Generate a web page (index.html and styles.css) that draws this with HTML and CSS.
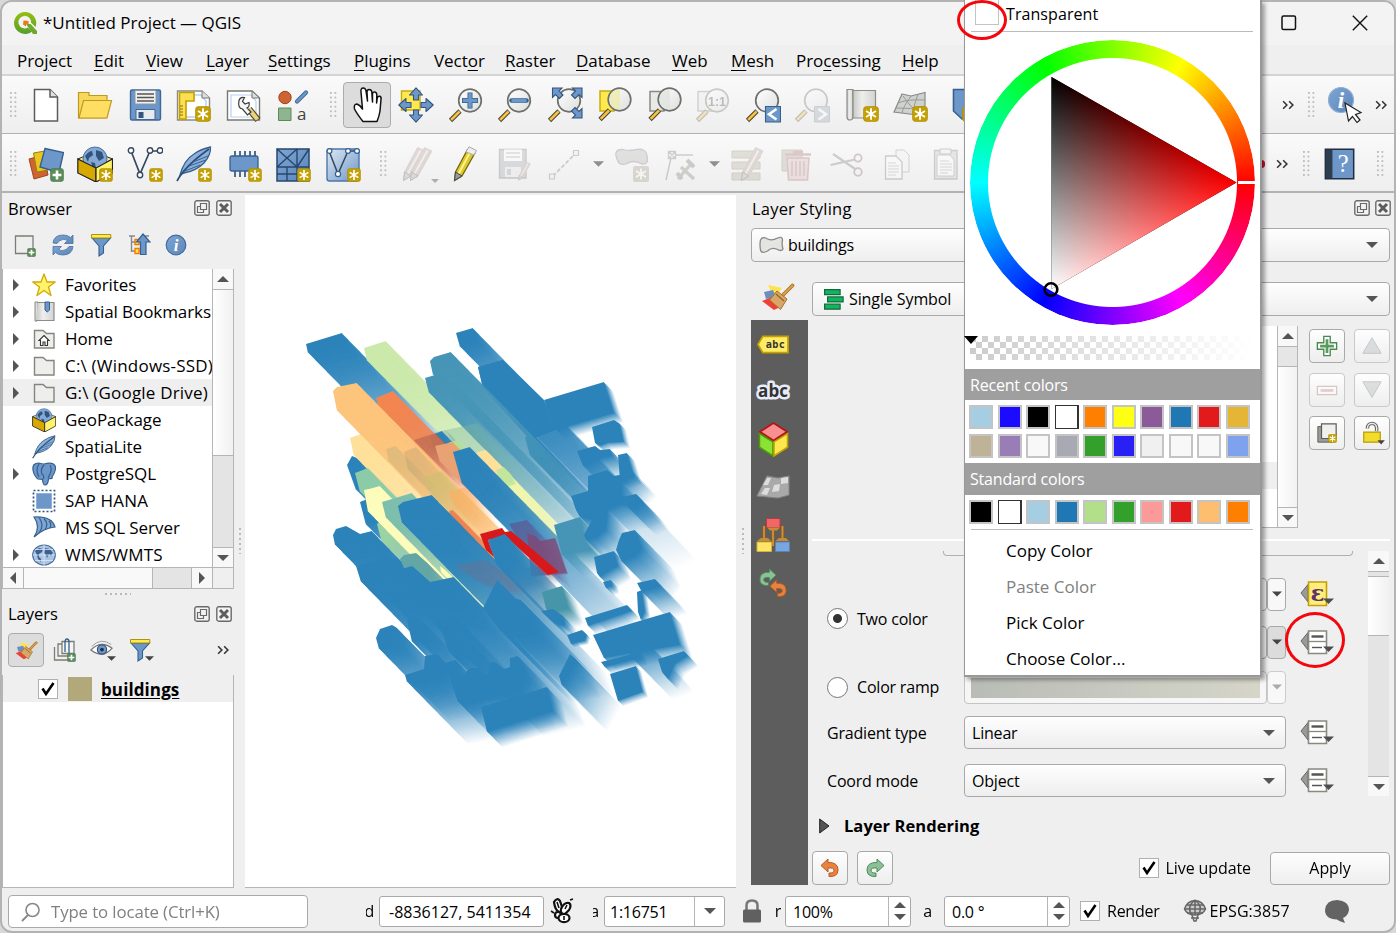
FILE: index.html
```html
<!DOCTYPE html>
<html lang="en">
<head>
<meta charset="utf-8">
<title>*Untitled Project — QGIS</title>
<link rel="stylesheet" href="styles.css">
</head>
<body>
<svg class="defs" aria-hidden="true">
  <defs>
    <linearGradient id="gSteel" x1="0" y1="0" x2="1" y2="1"><stop offset="0" stop-color="#7fa5d2"/><stop offset="1" stop-color="#5b86ba"/></linearGradient>
    <linearGradient id="gLens" x1="0" y1="0" x2="1" y2="1"><stop offset="0" stop-color="#ffffff"/><stop offset="1" stop-color="#dcdedc"/></linearGradient>
    <linearGradient id="gPaper" x1="0" y1="0" x2="1" y2="0"><stop offset="0" stop-color="#c8c9c7"/><stop offset=".4" stop-color="#eeeeec"/><stop offset="1" stop-color="#d3d4d2"/></linearGradient>
    <linearGradient id="gPaleBlue" x1="0" y1="0" x2="1" y2="1"><stop offset="0" stop-color="#dfe8f3"/><stop offset="1" stop-color="#6d96c8"/></linearGradient>
    <linearGradient id="gPlug" x1="0" y1="0" x2="0" y2="1"><stop offset="0" stop-color="#97bf0d"/><stop offset="1" stop-color="#539f2f"/></linearGradient>
  </defs>
  <symbol id="star" viewBox="0 0 16 16"><rect x=".5" y=".5" width="15" height="15" rx="3" fill="#c4a000" stroke="#a58b0b" stroke-width=".6"/><path d="M8 2.2v11.6M3 5l10 6M13 5L3 11" stroke="#fff" stroke-width="1.9"/></symbol>
  <symbol id="plus" viewBox="0 0 14 14"><rect x=".5" y=".5" width="13" height="13" rx="2.5" fill="#5a8c5a" stroke="#47764a" stroke-width=".6"/><path d="M7 2.6v8.8M2.6 7h8.8" stroke="#fff" stroke-width="2.6"/></symbol>
  <symbol id="lens" viewBox="0 0 36 36"><path d="M14 22l3-3" stroke="#222" stroke-width="4"/><path d="M2.500 33.500L12 24" stroke="#4a4a42" stroke-width="4.600"/><path d="M3.200 32.800L11.600 24.400" stroke="#fcc438" stroke-width="2.600"/><circle cx="22" cy="13.500" r="11.300" fill="url(#gLens)" stroke="#6e706b" stroke-width="1.700"/></symbol>
  <symbol id="new" viewBox="0 0 36 36"><path d="M6.500 2.500H22L29.500 10V34H6.500z" fill="#fff" stroke="#5c5c5c" stroke-width="1.500"/><path d="M22 2.500V10H29.500" fill="#e2e2e0" stroke="#5c5c5c" stroke-width="1.500"/></symbol>
  <symbol id="open" viewBox="0 0 36 36"><path d="M1.500 31V5.500H12V8.500H30V14L33 14L29 31z" fill="#f9d65c" stroke="#bf9a20" stroke-width="1.200"/><path d="M2 31L6.500 13.500H34.500L30 31z" fill="#ffdf63" stroke="#bf9a20" stroke-width="1.200"/></symbol>
  <symbol id="save" viewBox="0 0 36 36"><path d="M5 3H32q1.500 0 1.500 1.500V31.500q0 1.500-1.500 1.500H5Q3.500 33 3.500 31.500V4.500Q3.500 3 5 3z" fill="#6d97c9" stroke="#3f6797" stroke-width="1.400"/><path d="M8 3.500H29V17H8z" fill="#f1f1f0" stroke="#8a97a5"/><path d="M10 7H27M10 10.500H27M10 14H27" stroke="#555" stroke-width="1.300"/><path d="M9 22.500H28V32.500H9z" fill="#e9eaea" stroke="#3f6797"/><path d="M11.500 25h5v6h-5z" fill="#34557c"/></symbol>
  <symbol id="layout" viewBox="0 0 36 36"><path d="M1.500 4H26L33.500 11V33H1.500z" fill="#fff" stroke="#8a8b86" stroke-width="1.400"/><path d="M5 8H25L30 14V30H5z" fill="none" stroke="#b8d1f1" stroke-width="1.400"/><path d="M26 4V11H33.500" fill="#ddd" stroke="#777"/><path d="M3.500 5.500H18V14H10V32H3.500z" fill="#fcdf52" stroke="#c4a000" stroke-width="1.600"/><path d="M4 19h3M4 22h3M4 25h3M4 28h3" stroke="#8a7000"/><use href="#star" x="19" y="19" width="16" height="16"/></symbol>
  <symbol id="wrench" viewBox="0 0 36 36"><path d="M1.500 4H26L33.500 11V33H1.500z" fill="#fff" stroke="#777873" stroke-width="1.400"/><path d="M5 8H25L30 14V30H5z" fill="none" stroke="#b8d1f1" stroke-width="1.200"/><path d="M26 4V11H33.500z" fill="#ddd" stroke="#777"/><path d="M23 22L32 33" stroke="#4b4633" stroke-width="6.500"/><path d="M23 22L31.500 32.500" stroke="#ead378" stroke-width="4.200"/><path d="M13 13.500q1-4 5.500-3l-2 4 2.500 2.500 4-1.500q1 4-2 5.500l4 4-3.500 3-5-6q-5-1-3.500-8.500z" fill="#f5f5f5" stroke="#3a3a3a" stroke-width="1.200"/></symbol>
  <symbol id="style" viewBox="0 0 36 36"><circle cx="10" cy="10.500" r="6.200" fill="#cf6433" stroke="#9e451e"/><path d="M22 14.500L31 5.500" stroke="#3f6797" stroke-width="4.200" stroke-linecap="round"/><path d="M22 14.500L31 5.500" stroke="#6d97c9" stroke-width="2.400" stroke-linecap="round"/><path d="M3.500 21H16V33.500H3.500z" fill="#8fb48f" stroke="#5a8c5a"/></symbol>
  <symbol id="hand" viewBox="0 0 36 36"><path d="M14 34.500Q8 27 5.500 22Q4.500 17 8 17Q11 18 13.500 22L12 5Q11.500 1 14.300 1Q16.500 1 17 4L18.500 14L18 5Q18 2.500 20.300 2.500Q22.500 2.500 22.800 5L23.500 15V7Q23.800 4.500 26 5Q27.800 5.300 27.800 8L27.600 16L28.300 11Q29 8.800 30.800 9.300Q32.500 10 32 12.500L31 24Q30.500 28 28 34.500z" fill="#fff" stroke="#111" stroke-width="1.500" stroke-linejoin="round"/></symbol>
  <symbol id="pan" viewBox="0 0 36 36"><path d="M3.500 4H22V23H3.500z" fill="#ffe94e" stroke="#c9ac12" stroke-width="1.400"/><g fill="#6d97c9" stroke="#34557c" stroke-width="1.100" stroke-linejoin="round"><path id="par" d="M18 .8L24.500 8H20.500V13H15.500V8H11.500z"/><use href="#par" transform="rotate(90 18 18)"/><use href="#par" transform="rotate(180 18 18)"/><use href="#par" transform="rotate(270 18 18)"/></g></symbol>
  <symbol id="zin" viewBox="0 0 36 36"><use href="#lens"/><path d="M22 5.500v16M14 13.500h16" stroke="#34608f" stroke-width="5"/><path d="M22 6.300v14.400M14.800 13.500h14.400" stroke="#6d97c9" stroke-width="3.400"/></symbol>
  <symbol id="zout" viewBox="0 0 36 36"><use href="#lens"/><path d="M14.500 13.500h15" stroke="#34608f" stroke-width="4.600" stroke-linecap="round"/><path d="M14.500 13.500h15" stroke="#6d97c9" stroke-width="3.200"/></symbol>
  <symbol id="zfull" viewBox="0 0 36 36"><use href="#lens"/><g fill="#6d97c9" stroke="#34557c" stroke-width="1.100"><path d="M5.500 1H15L12 4L16 8L12.500 11.500L8.500 7.500L5.500 10.500z"/><path d="M35 1V10.500L32 7.500L28 11.500L24.500 8L28.500 4L25.500 1z"/><path d="M35 31H25.500L28.500 28L24.500 24L28 20.500L32 24.500L35 21.500z"/></g></symbol>
  <symbol id="zsel" viewBox="0 0 36 36"><path d="M4 4H18V24H4z" fill="#ffe94e" stroke="#c9ac12" stroke-width="1.500"/><use href="#lens" x="1.500" y="-1"/><path d="M24 2V22Q18 22 15 17.500Q11 9 18 4z" fill="#eeeba8" opacity=".8"/></symbol>
  <symbol id="zlay" viewBox="0 0 36 36"><path d="M4 4.500H18V24H4z" fill="#e8eae8" stroke="#888a85" stroke-width="1.500"/><use href="#lens" x="1.500" y="-1"/><path d="M24 3V22Q18 22 15 17.500Q11 9 18 4z" fill="#e0e2e0" opacity=".8"/></symbol>
  <symbol id="zone" viewBox="0 0 36 36"><path d="M3 4.500H18V24H3z" fill="#e8eae8" stroke="#888a85" stroke-width="1.500"/><use href="#lens"/></symbol>
  <symbol id="zprev" viewBox="0 0 36 36"><use href="#lens"/><path d="M20.500 19.500H35.500V35H20.500z" fill="#6d97c9" stroke="#34608f" stroke-width="1.100"/><path d="M31.500 22L24 27.200L31.500 32.500" fill="none" stroke="#fff" stroke-width="2.600"/></symbol>
  <symbol id="znext" viewBox="0 0 36 36"><use href="#lens"/><path d="M20.500 19.500H35.500V35H20.500z" fill="#9aa6b3" stroke="#7a8794"/><path d="M24.500 22L32 27.200L24.500 32.500" fill="none" stroke="#fff" stroke-width="2.600"/></symbol>
  <symbol id="scroll" viewBox="0 0 36 36"><path d="M3 2.500H9V29.500Q9 33 6 33Q3 33 3 30z" fill="url(#gPaper)" stroke="#8b8d89" stroke-width="1.200"/><path d="M9 3.500H31.500V31H9z" fill="url(#gPaper)" stroke="#8b8d89" stroke-width="1.200"/><use href="#star" x="19" y="19" width="16" height="16"/></symbol>
  <symbol id="mesh" viewBox="0 0 36 36"><path d="M9 7L18 9L32 5.500V26L24 28L1 25z" fill="#cfd1ce" stroke="#888a85" stroke-width="1.200"/><path d="M5 16Q14 12 32 13M3 21Q18 23 32 19M18 9Q10 20 9 26M25 7Q21 17 20 27M10 9Q17 20 27 27" fill="none" stroke="#999b97"/><use href="#star" x="19" y="19" width="16" height="16"/></symbol>
  <symbol id="bm" viewBox="0 0 36 36"><path d="M3.500 2.500H20V24L12 32L3.500 24z" fill="#6d97c9" stroke="#34608f" stroke-width="1.600"/><use href="#star" x="12" y="19" width="16" height="16"/></symbol>
  <symbol id="addlayers" viewBox="0 0 36 36"><path d="M1 13L16 9L20 29L6 33z" fill="#cf6433" stroke="#9e451e"/><path d="M5.500 7L17 5L20 24L9 26z" fill="#e9c51d" stroke="#9c8000"/><path d="M17 2.500L35.500 6.500L31 26.500L12 21z" fill="#6d97c9" stroke="#34608f" stroke-width="1.400"/><use href="#plus" x="22" y="22" width="14" height="14"/></symbol>
  <symbol id="gpkg" viewBox="0 0 36 36"><path d="M.8 13L8 10H28L35.500 13L19 22z" fill="#f7ee8d" stroke="#222"/><circle cx="18" cy="13" r="12" fill="#84a9d6" stroke="#49719f"/><path d="M8 10q4-5 7-5l1 4-4 3-1 4zM19 4l6 2 2 6-5 3-3-5zM14 16l4 1 1 5-3 1z" fill="#31547e"/><path d="M.8 13L19 22V36L.8 27z" fill="#d7a800" stroke="#222" stroke-width="1.200"/><path d="M35.500 13L19 22V36L35.500 27z" fill="#fff36c" stroke="#222" stroke-width="1.200"/></symbol>
  <symbol id="gpkgn" viewBox="0 0 36 36"><use href="#gpkg"/><use href="#star" x="22" y="22" width="14" height="14"/></symbol>
  <symbol id="vnew" viewBox="0 0 36 36"><path d="M4 5L13 28L23 5L33 5" fill="none" stroke="#34495e" stroke-width="1.700"/><g fill="#fff" stroke="#34495e" stroke-width="1.400"><circle cx="4" cy="4.500" r="2.700"/><circle cx="13" cy="29" r="2.700"/><circle cx="23" cy="4.500" r="2.700"/><circle cx="33" cy="4.500" r="2.700"/></g><use href="#star" x="22" y="22" width="14" height="14"/></symbol>
  <symbol id="feather" viewBox="0 0 36 36"><path d="M4 29Q8 14 18 8Q25 3 34.500 1Q35 9 28 17Q20 25 8 27z" fill="#8db0da" stroke="#34608f" stroke-width="1.300"/><path d="M1 35Q9 20 33 3" fill="none" stroke="#2b5078" stroke-width="1.700"/><path d="M13 20L30 14M17 16L32 10M9 25L24 19" fill="none" stroke="#34608f"/></symbol>
  <symbol id="feathern" viewBox="0 0 36 36"><use href="#feather"/><use href="#star" x="22" y="22" width="14" height="14"/></symbol>
  <symbol id="chip" viewBox="0 0 36 36"><path d="M9 5v26M14 5v26M19 5v26M24 5v26M29 5v26" stroke="#34557c" stroke-width="1.700"/><rect x="4" y="10" width="28" height="15" rx="2" fill="#6d97c9" stroke="#34608f" stroke-width="1.300"/><use href="#star" x="22" y="22" width="14" height="14"/></symbol>
  <symbol id="meshn" viewBox="0 0 36 36"><path d="M2 3H34V35H2z" fill="url(#gSteel)" stroke="#25476f" stroke-width="1.500"/><path d="M2 21H34M22 3V35M2 3L22 21M22 3L2 21M22 21L34 3M12 21V35M2 28H22" stroke="#25476f" stroke-width="1.400"/><use href="#star" x="22" y="22" width="14" height="14"/></symbol>
  <symbol id="virt" viewBox="0 0 36 36"><rect x="2" y="3" width="32" height="32" rx="2.500" fill="url(#gPaleBlue)" stroke="#4a77aa" stroke-width="1.400"/><path d="M4 5L13 28L23 5L33 5" fill="none" stroke="#34495e" stroke-width="1.500"/><g fill="#fff" stroke="#34608f" stroke-width="1.200"><circle cx="4.500" cy="5" r="2.400"/><circle cx="13" cy="28" r="2.600"/><circle cx="23" cy="5" r="2.400"/><circle cx="32" cy="5" r="2.400"/></g><use href="#star" x="22" y="22" width="14" height="14"/></symbol>
  <symbol id="pencil" viewBox="0 0 36 36"><path d="M19.500 3.500L27 7L14 30L6.500 34.500L7.500 26z" fill="#dcc82d" stroke="#6b6215" stroke-width="1.200"/><path d="M22.500 5.500L10.500 28" stroke="#fff48a" stroke-width="2"/><path d="M6.500 34.500L7.500 26L14 30z" fill="#999" stroke="#444"/><path d="M18 6L21 .8L28.500 4.500L26 9z" fill="#eee" stroke="#aaa"/></symbol>
  <symbol id="pencilg" viewBox="0 0 36 36"><path d="M20.500 1.500L28 5L14 30L6.500 34.500L7.500 26z" fill="#b59a8e" stroke="#999"/><path d="M23.500 4.500L10.500 28" stroke="#e9dfd8" stroke-width="2"/><path d="M6.500 34.500L7.500 26L14 30z" fill="#aaa" stroke="#555"/></symbol>
  <symbol id="pencils" viewBox="0 0 36 36"><use href="#pencilg" x="-4"/><use href="#pencilg" x="3"/></symbol>
  <symbol id="saveg" viewBox="0 0 36 36"><path d="M2.500 3.500H29V32H2.500z" fill="#9da2a8" stroke="#6c7178" stroke-width="1.300"/><path d="M7 3.500H25V15H7z" fill="#fff"/><path d="M9 7H23M9 11H23" stroke="#777"/><path d="M8 21H24V31H8z" fill="#e5e5e5"/><path d="M10 23h4v6h-4z" fill="#999"/><use href="#pencilg" x="18" y="14" width="20" height="22"/></symbol>
  <symbol id="line" viewBox="0 0 36 36"><path d="M6 30L28 8" stroke="#777" stroke-width="1.800" stroke-dasharray="4 2"/><path d="M2.500 28h5v5h-5zM26.500 4.500h5v5h-5z" fill="#eee" stroke="#777" stroke-width="1.200"/></symbol>
  <symbol id="poly" viewBox="0 0 36 36"><path d="M3 13Q-1 3 9 3.500Q14 5 20 4Q32 1 33 10Q35 19 28 18Q19 13 12 18Q5 20 3 13z" fill="#b1b5b0" stroke="#777" stroke-width="1.300"/><g opacity=".8"><rect x="19" y="20" width="16" height="16" rx="2" fill="#8b8466"/><path d="M27 22.500v11M22 25l10 6M32 25l-10 6" stroke="#fff" stroke-width="1.800"/></g></symbol>
  <symbol id="vertex" viewBox="0 0 36 36"><path d="M8 12L3 34M12 9H30" stroke="#777" stroke-width="1.500"/><path d="M5.500 5.500h7v7h-7zM5.500 5.500l7 7M12.500 5.500l-7 7" fill="none" stroke="#777" stroke-width="1.300"/><path d="M15 33L28 18M18 21L31 33" stroke="#888174" stroke-width="3.300"/><path d="M24 14L31 21M14 27L19 33" stroke="#777" stroke-width="4"/></symbol>
  <symbol id="rows" viewBox="0 0 36 36"><path d="M2 5H30V12H2zM2 16H30V23H2zM2 27H30V34H2z" fill="#b3ad93" stroke="#8b8672"/><use href="#pencilg" x="5"/></symbol>
  <symbol id="trash" viewBox="0 0 36 36"><path d="M2 4H22V25H2z" fill="#b3ad93" stroke="#8b8672"/><path d="M5 8.500H31M13 6H23" stroke="#a8686e" stroke-width="2.600"/><path d="M7 12H29L27.500 34H8.500z" fill="#d9b7b9" stroke="#a8686e" stroke-width="1.500"/><path d="M12 15V30M16 15V30M20 15V30M24 15V30" stroke="#a8686e" stroke-width="1.500"/></symbol>
  <symbol id="cut" viewBox="0 0 36 36"><path d="M4 8L27 23.500M1.500 19L26 13.500" stroke="#777" stroke-width="2.200"/><circle cx="29" cy="12" r="3.600" fill="none" stroke="#8a686a" stroke-width="1.800"/><circle cx="29" cy="26" r="3.800" fill="none" stroke="#8a686a" stroke-width="1.800"/></symbol>
  <symbol id="copy" viewBox="0 0 36 36"><path d="M17 4H25L30 9V26H17z" fill="#f4f4f4" stroke="#888"/><path d="M6.500 10H17L23 16V33H6.500z" fill="#fff" stroke="#777" stroke-width="1.300"/><path d="M9 17h8M9 20h11M9 23h11M9 26h11M9 29h8" stroke="#999"/></symbol>
  <symbol id="paste" viewBox="0 0 36 36"><path d="M6.500 4.500H29V33H6.500z" fill="#c7c4bd" stroke="#777" stroke-width="1.300"/><path d="M9 9H22L26 14V30H9z" fill="#fff" stroke="#888"/><path d="M12 3H23V8H12z" fill="#eee" stroke="#777"/><path d="M12 15h9M12 18h12M12 21h12M12 24h12M12 27h8" stroke="#999"/></symbol>
  <symbol id="help" viewBox="0 0 36 36"><path d="M2.500 2.500H32.500V33.500H2.500z" fill="#6d97c9" stroke="#1f2f40" stroke-width="1.600"/><path d="M3 3H10V33H3z" fill="#2e3e4e"/></symbol>
  <symbol id="float" viewBox="0 0 16 16"><rect x=".8" y=".8" width="14.400" height="14.400" rx="2" fill="#f3f3f3" stroke="#6a6a6a" stroke-width="1.400"/><path d="M6.500 3.500h6v6h-6zM6 6.500H3.500v6h6V10" fill="none" stroke="#6a6a6a" stroke-width="1.200"/></symbol>
  <symbol id="close" viewBox="0 0 16 16"><rect x=".8" y=".8" width="14.400" height="14.400" rx="2" fill="#f3f3f3" stroke="#6a6a6a" stroke-width="1.400"/><path d="M4 4l8 8M12 4l-8 8" stroke="#5c5c5c" stroke-width="3"/></symbol>
  <symbol id="addsel" viewBox="0 0 24 24"><path d="M2.500 3H20V20.500H2.500z" fill="#eee" stroke="#7d7d75" stroke-width="1.300"/><use href="#plus" x="14" y="15" width="9" height="9"/></symbol>
  <symbol id="refresh" viewBox="0 0 24 24"><path d="M2 10Q3 2 12 2Q17 2 19.500 4.500L22 2V10.500H13.500L16.500 7.500Q13 5 9 7.500Q7 9 6 10.500z" fill="url(#gSteel)" stroke="#49719f" stroke-width=".8"/><path d="M22 13.500Q21 22 12 22Q7 22 4.500 19.500L2 22V13.500H10.500L7.500 16.500Q11 19 15 16.500Q17 15 18 13.500z" fill="url(#gSteel)" stroke="#49719f" stroke-width=".8"/></symbol>
  <symbol id="filter" viewBox="0 0 24 24"><path d="M3 5L10 13V23L14.500 20V13L21.500 5z" fill="#6d97c9" stroke="#34608f" stroke-width="1.100"/><path d="M2.500 1.500H21.800V5H2.500z" fill="#ffe94e" stroke="#a48a00" stroke-width=".9"/></symbol>
  <symbol id="collapse" viewBox="0 0 24 24"><path d="M2 3H8M4.500 3V19M4.500 9H8M4.500 18H8M14 3h8" stroke="#888" stroke-width="1.400"/><path d="M8 6.500h4v5H8zM8 15.500h4v5H8z" fill="#fce94f" stroke="#f57900" stroke-width="1.400"/><path d="M16 1L23 9H19V21.500H13.500V9H9.500z" fill="#6d97c9" stroke="#34608f" stroke-width="1.200"/></symbol>
  <symbol id="fav" viewBox="0 0 24 24"><path d="M12 1L15 9H23.200L16.500 14L19 22.500L12 17.500L5 22.500L7.500 14L.8 9H9z" fill="#fff36b" stroke="#d4a800" stroke-width="1.300" stroke-linejoin="round"/></symbol>
  <symbol id="sbm" viewBox="0 0 24 24"><path d="M3 2H6V19.500Q5 22 3 21z" fill="#ddd" stroke="#8b8d89"/><path d="M6 2.500H22V20.500H4" fill="url(#gPaper)" stroke="#8b8d89" stroke-width="1.200"/><path d="M13 2h4.500v8L15.200 12L13 10z" fill="#6d97c9" stroke="#34608f"/></symbol>
  <symbol id="folder" viewBox="0 0 24 24"><path d="M2.500 21V3.500H11L14.500 6.500H22V21z" fill="#eeeeec" stroke="#85857f" stroke-width="1.400"/></symbol>
  <symbol id="home" viewBox="0 0 24 24"><use href="#folder"/><path d="M12 8.500L17 13.500H15.500V18.500H13V15H11V18.500H8.500V13.500H7z" fill="#fff" stroke="#333" stroke-width="1.100"/></symbol>
  <symbol id="pg" viewBox="0 0 24 24"><path d="M1 8Q0 1 7 1Q10 2 12 2Q22-.5 23.500 5Q24 9 20 15Q21 17 18 16.500L16.500 17Q16 23 13 23Q11 23 10.500 17.500L6 17Q2 14 1 8z" fill="#6d97c9" stroke="#34608f" stroke-width="1.200"/><path d="M7 2Q3 8 7 15M11 17Q13 14 10 12Q8 7 12 3M18 3Q21 8 16 16" fill="none" stroke="#34608f" stroke-width="1.200"/></symbol>
  <symbol id="hana" viewBox="0 0 24 24"><path d="M4.500 4.500h15v15h-15z" fill="#6d97c9" stroke="#8fb0da"/><rect x="1.500" y="1.500" width="21" height="21" fill="none" stroke="#34557c" stroke-width="1.700" stroke-dasharray="2 2"/></symbol>
  <symbol id="mssql" viewBox="0 0 24 24"><path d="M2 1Q20 0 23 11Q12 12 2 21Q9 11 2 1z" fill="#7fa5d2" stroke="#34608f" stroke-width="1.200"/><path d="M7 1.500Q13 9 7 17M12 2.500Q17 8 13 13.500M17 5Q20 8 18 12" fill="none" stroke="#34608f" stroke-width="1.200"/></symbol>
  <symbol id="wms" viewBox="0 0 24 24"><ellipse cx="12" cy="12" rx="11.300" ry="10" fill="#a9c3e3" stroke="#49719f" stroke-width="1.200"/><path d="M3 8l4-3 4 1-1 3-3 2v3l2 2v3l-3-3-1-4zM13 5l5 1 3 4-2 3-2-2-2 4-1-3-2-2z" fill="#3c618e"/><path d="M1 12H23M12 2V22M3 6.500h18M3 17.500h18" stroke="#dce8f5" stroke-width=".8"/></symbol>
  <symbol id="brush" viewBox="0 0 34 28"><path d="M7 2l14 3-8 10z" fill="#ffe34b"/><path d="M3 9l9-2 3 7-10 2z" fill="#6d8fc0"/><path d="M1 18l10-4 8 10-6 3z" fill="#ee4035"/><path d="M21 13L31.500 2.500" stroke="#a76b1c" stroke-width="3.600" stroke-linecap="round"/><path d="M21 13L31.500 2.500" stroke="#dca14c" stroke-width="2" stroke-linecap="round"/><path d="M16 8L26 16L19.500 26.500L8.500 17z" fill="#d8a767" stroke="#a2702c"/><path d="M15 11L23 18" stroke="#8f6024" stroke-width="1.200"/></symbol>
  <symbol id="grp" viewBox="0 0 24 24"><path d="M1.500 9V22H15M5 6V18H17V6z" fill="none" stroke="#7d7d75" stroke-width="1.300"/><path d="M9 3.500h12v12H9z" fill="#f5f5f5" stroke="#7d7d75" stroke-width="1.300"/><path d="M12 14V4q0-3 2-3t2 3v11" fill="none" stroke="#34608f" stroke-width="1.300"/><use href="#plus" x="14" y="15" width="9" height="9"/></symbol>
  <symbol id="eye" viewBox="0 0 26 24"><path d="M1 12Q12 1 24 10Q14 22 1 12z" fill="#fff" stroke="#777" stroke-width="1.300"/><path d="M2 8Q12-2 23 6" fill="none" stroke="#999"/><circle cx="13" cy="11.500" r="5" fill="#6d97c9" stroke="#34557c" stroke-width="1.300"/><circle cx="13" cy="11.500" r="2" fill="#1d2e44"/></symbol>
  <symbol id="more" viewBox="0 0 14 10"><path d="M1.200 1l4 4-4 4M7.700 1l4 4-4 4" fill="none" stroke="#333" stroke-width="1.700"/></symbol>
  <symbol id="dn" viewBox="0 0 12 6"><path d="M0 0H12L6 6z" fill="currentColor"/></symbol>
  <symbol id="rt" viewBox="0 0 6 12"><path d="M0 0V12L6 6z" fill="currentColor"/></symbol>
  <symbol id="pshape" viewBox="0 0 24 18"><path d="M1 14Q0 8 1 4Q3 0 8 3Q13 5 18 2Q23 0 23 4Q22 9 23.500 13Q22 16 17 13Q12 11 8 15Q2 18 1 14z" fill="#e4e5e3" stroke="#888a85" stroke-width="1.300"/></symbol>
  <symbol id="single" viewBox="0 0 20 21"><g fill="#12b45e" stroke="#12693c" stroke-width="1.200"><path d="M.6.600h15.500v5H.600zM3.600 7.900h15.500v5H3.600zM.600 15.200h15.500v5H.600z"/></g></symbol>
  <symbol id="cube" viewBox="0 0 32 36"><path d="M16 1L30 10L16 19L2 10z" fill="#fa8f8f" stroke="#b3141a" stroke-width="1.800"/><path d="M1.500 12L15.500 20.500V35L1.500 26z" fill="#8ae234" stroke="#4e9a06" stroke-width="1.600"/><path d="M30.500 12L16.500 20.500V35L30.500 26z" fill="#fce94f" stroke="#c4a000" stroke-width="1.600"/></symbol>
  <symbol id="gmesh" viewBox="0 0 34 24"><path d="M11 1L22 3L33 1V20L22 23L1 21z" fill="#a9a9a9" stroke="#848484"/><path d="M11 3L15 3L12 10L7 10zM18 10L24 9L23 16L16 17zM25 3l7-1v6l-7 1zM9 13l5 0-3 7-6-1z" fill="#ddd"/></symbol>
  <symbol id="brushes" viewBox="0 0 34 34"><path d="M8 22V8M17 12V28M26.500 22V8" stroke="#8f5c16" stroke-width="3.400"/><path d="M8 22V8M17 12V28M26.500 22V8" stroke="#cf8f3c" stroke-width="1.800"/><path d="M10.500.500H24V9.500H10.500z" fill="#f06767" stroke="#b93a3a"/><path d="M11 9.500H24L21 12.500H14zM1 23L5 20H12L15 23zM19.500 23L23 20H30L33 23z" fill="#c98a36"/><path d="M1 24H15.500V33.500H1z" fill="#ffe469" stroke="#d3b532"/><path d="M19.500 24H33.500V33.500H19.500z" fill="#7aa6de" stroke="#5a83b8"/></symbol>
  <symbol id="undo" viewBox="0 0 20 20"><path d="M1 7.500L8 1V4.500Q18 4 18 12Q18 19 9 18.500V15Q14 15.500 14 12Q14 9.500 8 10V14z" fill="#e9823f" stroke="#b85a20"/></symbol>
  <symbol id="redo" viewBox="0 0 20 20"><path d="M19 7.500L12 1V4.500Q2 4 2 12Q2 19 11 18.500V15Q6 15.500 6 12Q6 9.500 12 10V14z" fill="#8cc096" stroke="#4f8a5a"/></symbol>
  <symbol id="dd" viewBox="0 0 34 26"><path d="M1 12L8 3.500V21z" fill="#9a9a9a" stroke="#666"/><path d="M8.500 2H26.500V24.500H8.500z" fill="#fff" stroke="#888a80" stroke-width="1.600"/><path d="M8.500 12.500H26.500" stroke="#888a80" stroke-width="1.300"/><path d="M11.500 7.500H23.500" stroke="#555" stroke-width="2.400"/><path d="M12 18.500H22" stroke="#555" stroke-width="1.400"/><path d="M23 17.500H34L28.500 23z" fill="#4d4d4d"/></symbol>
</svg>

<div class="screen">
<div class="window">
  <header class="titlebar">
    <svg class="logo" viewBox="0 0 24 24"><path d="M12 1a11 11 0 1 0 7 19.500l-4-4A6.300 6.300 0 1 1 18 11.500l4.500 4.500A11 11 0 0 0 12 1z" fill="url(#gPlug)"/><path d="M13 13h4.500L24 20v3h-4z" fill="#6fa82a"/><path d="M10.500 9.500l5 .5v3h-2.500v2.500l-3-2z" fill="#ee7913"/></svg>
    <span class="title">*Untitled Project — QGIS</span>
    <div class="winctl">
      <svg width="16" height="16" viewBox="0 0 16 16"><rect x="1" y="1" width="13.500" height="13.500" rx="1.500" fill="none" stroke="#111" stroke-width="1.500"/></svg>
      <svg width="16" height="16" viewBox="0 0 16 16"><path d="M.8.800l14.400 14.400M15.200.800L.8 15.200" stroke="#111" stroke-width="1.400"/></svg>
    </div>
  </header>
  <nav class="menubar">
    <span>Pro<u>j</u>ect</span><span><u>E</u>dit</span><span><u>V</u>iew</span><span><u>L</u>ayer</span><span><u>S</u>ettings</span><span><u>P</u>lugins</span><span>Vect<u>o</u>r</span><span><u>R</u>aster</span><span><u>D</u>atabase</span><span><u>W</u>eb</span><span><u>M</u>esh</span><span>Pro<u>c</u>essing</span><span><u>H</u>elp</span>
  </nav>
  <div class="toolbar">
    <i class="grip first"></i>
    <b class="slot"><svg><use href="#new"/></svg></b><b class="slot"><svg><use href="#open"/></svg></b><b class="slot"><svg><use href="#save"/></svg></b><b class="slot"><svg><use href="#layout"/></svg></b><b class="slot"><svg><use href="#wrench"/></svg></b><b class="slot"><svg viewBox="0 0 36 36"><use href="#style"/><text class="ta" x="22" y="33">a</text></svg></b>
    <i class="grip mid"></i>
    <b class="slot"><span class="pressed"><svg><use href="#hand"/></svg></span></b><b class="slot"><svg><use href="#pan"/></svg></b><b class="slot"><svg><use href="#zin"/></svg></b><b class="slot"><svg><use href="#zout"/></svg></b><b class="slot"><svg><use href="#zfull"/></svg></b><b class="slot"><svg><use href="#zsel"/></svg></b><b class="slot"><svg><use href="#zlay"/></svg></b><b class="slot off"><svg viewBox="0 0 36 36"><use href="#zone"/><text class="t11" x="22" y="18.500">1:1</text></svg></b><b class="slot"><svg><use href="#zprev"/></svg></b><b class="slot off"><svg><use href="#znext"/></svg></b><b class="slot"><svg><use href="#scroll"/></svg></b><b class="slot"><svg><use href="#mesh"/></svg></b><b class="slot bm"><svg><use href="#bm"/></svg></b>
    <div class="end e1"><svg class="more"><use href="#more"/></svg><i class="grip"></i><svg class="big" viewBox="0 0 36 36"><circle cx="14" cy="13" r="12.500" fill="url(#gSteel)" stroke="#8fb0d8" stroke-width="1.200"/><text class="ti" x="14" y="21" font-size="23">i</text><path d="M18 16L21.500 34L25.500 29.500L30 35.500L33 33L28.500 27.500L34 25.500z" fill="#fff" stroke="#222" stroke-width="1.200"/></svg><svg class="more"><use href="#more"/></svg></div>
  </div>
  <div class="toolbar second">
    <i class="grip first"></i>
    <b class="slot"><svg><use href="#addlayers"/></svg></b><b class="slot"><svg><use href="#gpkgn"/></svg></b><b class="slot"><svg><use href="#vnew"/></svg></b><b class="slot"><svg><use href="#feathern"/></svg></b><b class="slot"><svg><use href="#chip"/></svg></b><b class="slot"><svg><use href="#meshn"/></svg></b><b class="slot"><svg><use href="#virt"/></svg></b>
    <i class="grip mid"></i>
    <b class="slot off corner"><svg><use href="#pencils"/></svg><svg class="tri"><use href="#dn"/></svg></b><b class="slot"><svg><use href="#pencil"/></svg></b><b class="slot off"><svg><use href="#saveg"/></svg></b><b class="slot off"><svg><use href="#line"/></svg></b><b class="drop"><svg><use href="#dn"/></svg></b><b class="slot off"><svg><use href="#poly"/></svg></b><b class="slot off"><svg><use href="#vertex"/></svg></b><b class="drop"><svg><use href="#dn"/></svg></b><b class="slot off"><svg><use href="#rows"/></svg></b><b class="slot off"><svg><use href="#trash"/></svg></b><b class="slot off"><svg><use href="#cut"/></svg></b><b class="slot off"><svg><use href="#copy"/></svg></b><b class="slot off"><svg><use href="#paste"/></svg></b>
    <div class="end e2"><i class="dot"></i><svg class="more"><use href="#more"/></svg><i class="grip"></i><svg class="big" viewBox="0 0 36 36"><use href="#help"/><text class="tq" x="21.500" y="26">?</text></svg><i class="grip"></i></div>
  </div>

  <main class="main">
    <aside class="left">
      <div class="dockhead"><span>Browser</span><svg><use href="#float"/></svg><svg><use href="#close"/></svg></div>
      <div class="tools"><svg><use href="#addsel"/></svg><svg><use href="#refresh"/></svg><svg><use href="#filter"/></svg><svg><use href="#collapse"/></svg><svg class="inf" viewBox="0 0 22 22"><circle cx="11" cy="11" r="9.800" fill="url(#gSteel)" stroke="#3e6ba0" stroke-width="1.200"/><text class="ti" x="11" y="17" font-size="17">i</text></svg></div>
      <div class="tree">
        <div class="treelist">
          <p><svg class="ar"><use href="#rt"/></svg><svg class="ic"><use href="#fav"/></svg>Favorites</p>
          <p><svg class="ar"><use href="#rt"/></svg><svg class="ic"><use href="#sbm"/></svg>Spatial Bookmarks</p>
          <p><svg class="ar"><use href="#rt"/></svg><svg class="ic"><use href="#home"/></svg>Home</p>
          <p class="wide"><svg class="ar"><use href="#rt"/></svg><svg class="ic"><use href="#folder"/></svg>C:\ (Windows-SSD)</p>
          <p class="hl wide"><svg class="ar"><use href="#rt"/></svg><svg class="ic"><use href="#folder"/></svg>G:\ (Google Drive)</p>
          <p><svg class="ar"></svg><svg class="ic"><use href="#gpkg"/></svg>GeoPackage</p>
          <p><svg class="ar"></svg><svg class="ic"><use href="#feather"/></svg>SpatiaLite</p>
          <p><svg class="ar"><use href="#rt"/></svg><svg class="ic"><use href="#pg"/></svg>PostgreSQL</p>
          <p class="wide"><svg class="ar"></svg><svg class="ic"><use href="#hana"/></svg>SAP HANA</p>
          <p><svg class="ar"></svg><svg class="ic"><use href="#mssql"/></svg>MS SQL Server</p>
          <p class="wide"><svg class="ar"><use href="#rt"/></svg><svg class="ic"><use href="#wms"/></svg>WMS/WMTS</p>
        </div>
        <div class="vbar tv"><b><svg class="up"><use href="#dn"/></svg></b><i></i><em></em><b><svg><use href="#dn"/></svg></b></div>
        <div class="hbar"><b><svg class="lf"><use href="#rt"/></svg></b><i></i><em></em><b><svg><use href="#rt"/></svg></b></div>
        <div class="cornerbox"></div>
      </div>
      <div class="hsplit"><i></i></div>
      <div class="dockhead layers"><span>Layers</span><svg><use href="#float"/></svg><svg><use href="#close"/></svg></div>
      <div class="tools lt">
        <span class="pressed"><svg class="br"><use href="#brush"/></svg></span>
        <svg class="t2"><use href="#grp"/></svg>
        <span class="dd"><svg><use href="#eye"/></svg><svg class="tri"><use href="#dn"/></svg></span>
        <span class="dd"><svg><use href="#filter"/></svg><svg class="tri"><use href="#dn"/></svg></span>
        <svg class="more"><use href="#more"/></svg>
      </div>
      <div class="layerlist"><div class="layer"><span class="check"><svg viewBox="0 0 16 16"><path d="M2.500 7.500L6 13L13.500 2" /></svg></span><i></i><u>buildings</u></div></div>
    </aside>
    <div class="vsplit"><i></i></div>
    <section class="canvas"><canvas id="map" width="491" height="692"></canvas></section>
    <div class="vsplit rs"><i></i></div>
    <aside class="right">
      <div class="dockhead rh"><span>Layer Styling</span><svg><use href="#float"/></svg><svg><use href="#close"/></svg></div>
      <div class="combo top"><svg class="pi"><use href="#pshape"/></svg><span>buildings</span><svg class="cd"><use href="#dn"/></svg></div>
      <div class="styling">
        <div class="tabs">
          <div class="tab cur"><svg width="34" height="28"><use href="#brush"/></svg></div>
          <div class="tabrest">
            <svg width="32" height="19" viewBox="0 0 33 19"><path d="M1 9.500L6 1H32V18H6z" fill="#ffec66" stroke="#c4a000" stroke-width="1.800"/><text class="tl" x="19" y="13.500">abc</text></svg>
            <svg width="36" height="22" viewBox="0 0 36 22"><text class="tm" x="18" y="17">abc</text></svg>
            <svg width="31" height="35"><use href="#cube"/></svg>
            <svg width="34" height="24"><use href="#gmesh"/></svg>
            <svg width="34" height="34"><use href="#brushes"/></svg>
            <svg width="30" height="30" viewBox="0 0 30 30"><use href="#redo" x="0" y="0" width="19" height="19"/><use href="#undo" x="11" y="11" width="19" height="19"/></svg>
          </div>
        </div>
        <div class="body">
          <div class="combo sym"><svg class="si"><use href="#single"/></svg><span>Single Symbol</span><svg class="cd"><use href="#dn"/></svg></div>
          <div class="symtree">
            <div class="symlist"><i></i></div>
            <div class="vbar sv"><b><svg class="up"><use href="#dn"/></svg></b><em></em><i></i><b><svg><use href="#dn"/></svg></b></div>
            <div class="btns">
              <span><svg viewBox="0 0 24 24"><path d="M8.500 1.500h7v7h7v7h-7v7h-7v-7h-7v-7h7z" fill="#fff" stroke="#4a8a50" stroke-width="1.500"/><path d="M12 4.500v15M4.500 12h15" stroke="#5a9a60" stroke-width="3"/></svg></span>
              <span class="dis"><svg viewBox="0 0 24 24"><path d="M12 3L22 20H2z" fill="#b9bec2" stroke="#888"/></svg></span>
              <span class="dis"><svg viewBox="0 0 24 24"><path d="M1.500 8h21v9h-21z" fill="#fff" stroke="#b9898d" stroke-width="1.400"/><path d="M5 12.500h14" stroke="#c99da0" stroke-width="3"/></svg></span>
              <span class="dis"><svg viewBox="0 0 24 24"><path d="M12 20L22 3H2z" fill="#b9bec2" stroke="#888"/></svg></span>
              <span><svg viewBox="0 0 24 24"><path d="M2 5H6V18H18V22H2z" fill="#9a9c97" stroke="#5c5c58"/><path d="M6 2H22V18H6z" fill="#f0f0ee" stroke="#5c5c58" stroke-width="1.300"/><use href="#star" x="13" y="13" width="10" height="10"/></svg></span>
              <span><svg viewBox="0 0 24 24"><path d="M7 7Q7 1.500 12.500 1.500Q18 2 17 10" fill="none" stroke="#666" stroke-width="3.800"/><path d="M7 7Q7 1.500 12.500 1.500Q18 2 17 10" fill="none" stroke="#eee" stroke-width="1.500"/><path d="M3 11H21V22H3z" fill="#f2dc2b" stroke="#b89a00" stroke-width="1.300"/><path d="M18 20h8l-4 4.500z" fill="#444"/></svg></span>
            </div>
          </div>
          <div class="props">
            <div class="plist">
              <div class="groupend"></div>
              <div class="prow c1"><span></span><div class="colorbtn"></div><div class="cdrop"><svg><use href="#dn"/></svg></div><svg class="ddi" viewBox="0 0 34 26"><path d="M1 12L8 3.500V21z" fill="#9a9a9a" stroke="#666"/><path d="M8.500 1H26.500V24.500H8.500z" fill="#ffee7e" stroke="#c4a000" stroke-width="1.600"/><text class="te" x="17.500" y="20">ε</text><path d="M23 17.500H34L28.500 23z" fill="#4d4d4d"/></svg></div>
              <div class="prow c2"><label class="rad lift"><i class="on"></i>Two color</label><div class="colorbtn"></div><div class="cdrop act"><svg><use href="#dn"/></svg></div><svg class="ddi"><use href="#dd"/></svg></div>
              <div class="prow c3"><label class="rad"><i></i>Color ramp</label><div class="colorbtn ramp"><b></b></div><div class="cdrop fadeb"><svg><use href="#dn"/></svg></div></div>
              <div class="prow c4"><span>Gradient type</span><div class="combo"><span>Linear</span><svg class="cd"><use href="#dn"/></svg></div><svg class="ddi"><use href="#dd"/></svg></div>
              <div class="prow c5"><span>Coord mode</span><div class="combo"><span>Object</span><svg class="cd"><use href="#dn"/></svg></div><svg class="ddi"><use href="#dd"/></svg></div>
            </div>
            <div class="vbar pv"><b><svg class="up"><use href="#dn"/></svg></b><em></em><i></i><em class="g"></em><b><svg><use href="#dn"/></svg></b></div>
          </div>
          <div class="render"><svg viewBox="0 0 11 16"><path d="M.7 1V15L10 8z" fill="#555" stroke="#222"/></svg><strong>Layer Rendering</strong></div>
          <div class="foot"><span class="fb"><svg><use href="#undo"/></svg></span><span class="fb"><svg><use href="#redo"/></svg></span><span class="check"><svg viewBox="0 0 16 16"><path d="M2.500 7.500L6 13L13.500 2" /></svg></span><label>Live update</label><button>Apply</button></div>
        </div>
      </div>
    </aside>
  </main>

  <footer class="status">
    <div class="locate"><svg viewBox="0 0 20 20"><circle cx="11.500" cy="8" r="6.500" fill="none" stroke="#888" stroke-width="1.600"/><path d="M7 13L1 19" stroke="#888" stroke-width="1.800"/></svg>Type to locate (Ctrl+K)</div>
    <span class="clip k1">d</span>
    <div class="field coord">-8836127, 5411354</div>
    <svg class="ext" viewBox="0 0 24 26"><g fill="#fff" stroke="#111" stroke-width="2.200"><path d="M4 4Q7-1 10 3L13 12Q12 15 9 14Q5 12 4 4z"/><path d="M19 5Q22 7 19 12L14 17Q10 15 11 11Q14 4 19 5z"/><circle cx="8" cy="17" r="3"/><ellipse cx="14" cy="20" rx="5.500" ry="4.200"/></g><path d="M7 4l2 6M15 11l2-4M1 13l3 2M20 2l3-1M14 18v4" stroke="#111" stroke-width="1.600"/></svg>
    <span class="clip k2">a</span>
    <div class="field scale"><span>1:16751</span><b><svg><use href="#dn"/></svg></b></div>
    <svg class="lock" viewBox="0 0 20 24"><path d="M4.500 11V6.500Q4.500 1.500 10 1.500Q15.500 1.500 15.500 6.500V11" fill="none" stroke="#777" stroke-width="2.500"/><rect x="1" y="10.500" width="18" height="13" rx="1.500" fill="#606060"/></svg>
    <span class="clip k3">r</span>
    <div class="field spin"><span>100%</span><b><svg class="up"><use href="#dn"/></svg><svg><use href="#dn"/></svg></b></div>
    <span class="clip k4">a</span>
    <div class="field spin"><span>0.0 °</span><b><svg class="up"><use href="#dn"/></svg><svg><use href="#dn"/></svg></b></div>
    <span class="check"><svg viewBox="0 0 16 16"><path d="M2.500 7.500L6 13L13.500 2" /></svg></span><label class="rn">Render</label>
    <svg class="globe" viewBox="0 0 24 24"><path d="M1.500 10Q4 2 12 1.500Q20 2 22.500 10Q20 16 12 16Q4 16 1.500 10z" fill="#ccc" stroke="#666" stroke-width="1.500"/><path d="M1 10H23M12 1V16M3.500 6h17M4 14h16M12 1Q3 8 9 16L11 22H13L15 16Q21 8 12 1M8 19h8" fill="none" stroke="#666" stroke-width="1.500"/></svg>
    <span class="epsg">EPSG:3857</span>
    <svg class="msg" viewBox="0 0 26 24"><path d="M13 1Q25 2 25 11Q24 17 19 19L21 24Q15 22 13 20.500Q1 20 1 11Q2 1 13 1z" fill="#636363"/></svg>
  </footer>
</div>

  <div class="popup">
    <div class="transp"><i></i>Transparent</div>
    <div class="wheel">
      <div class="ring"></div>
      <svg class="wtri" viewBox="0 0 290 290">
        <defs>
          <linearGradient id="wr" gradientUnits="userSpaceOnUse" x1="83.500" y1="39.500" x2="176" y2="198.250"><stop offset="0" stop-color="#000"/><stop offset="1" stop-color="#f00"/></linearGradient>
          <linearGradient id="wc" gradientUnits="userSpaceOnUse" x1="176" y1="92.250" x2="83.500" y2="251"><stop offset="0" stop-color="#000"/><stop offset="1" stop-color="#0ff"/></linearGradient>
        </defs>
        <g class="iso"><path d="M83.500 39L268.500 144.500L83.500 251z" fill="url(#wr)"/><path class="scr" d="M83.500 39L268.500 144.500L83.500 251z" fill="url(#wc)"/></g>
        <path d="M270 144.500h18" stroke="#fff" stroke-width="3"/>
        <circle cx="83" cy="251.500" r="6.300" fill="none" stroke="#000" stroke-width="2.600"/>
      </svg>
    </div>
    <div class="alpha"><svg viewBox="0 0 14 28"><path d="M0 0H14L7 8z" fill="#000"/></svg></div>
    <h4>Recent colors</h4>
    <div class="swatches rec"><i class="s1"></i><i class="s2"></i><i class="s3"></i><i class="s4 sel"></i><i class="s5"></i><i class="s6"></i><i class="s7"></i><i class="s8"></i><i class="s9"></i><i class="s10"></i><i class="s11"></i><i class="s12"></i><i class="s13"></i><i class="s14"></i><i class="s15"></i><i class="s16"></i><i class="s17"></i><i class="s13"></i><i class="s13"></i><i class="s18"></i></div>
    <h4>Standard colors</h4>
    <div class="swatches"><i class="s3"></i><i class="s4 sel"></i><i class="s1"></i><i class="s8"></i><i class="s19"></i><i class="s15"></i><i class="s20"></i><i class="s9"></i><i class="s21"></i><i class="s5"></i></div>
    <ul><li>Copy Color</li><li class="gray">Paste Color</li><li>Pick Color</li><li>Choose Color...</li></ul>
  </div>
  <div class="mark m1"></div>
  <div class="mark m2"></div>
</div>
<script src="map.js"></script>
</body>
</html>
```

FILE: map.js
```js
// Building footprints extruded towards the lower right, fading with distance.
const BLUE = '#2b83ba';
const TEAL = '#4695b7';
// [colour, extrusion length, falloff exponent, opacity, outline points]
const shapes = [
  [BLUE, 118, 1.7, 1, [306,344, 342,333, 345,343, 308,353]],
  [BLUE, 80, 1.5, 1, [456,333, 473,328, 476,340, 460,347]],
  ['#cbe9ab', 130, 2.5, 1, [364,348, 386,341, 389,353, 367,361]],
  [BLUE, 130, 1.4, .6, [530,427, 560,420, 568,430, 540,440]],
  [BLUE, 135, 1.7, 1, [478,367, 503,360, 508,378, 483,388]],
  [BLUE, 10, 1, 1, [544,400, 604,382, 614,413, 556,430]],
  [BLUE, 0, 1, 1, [478,367, 503,360, 544,400, 556,430, 530,440, 483,388]],
  [BLUE, 70, 2, 1, [525,437, 533,434, 541,448, 530,456]],
  [TEAL, 180, 2, 1, [430,361, 434,357, 451,352, 456,368, 433,375]],
  [TEAL, 165, 1.6, 1, [425,378, 445,372, 451,388, 429,393]],
  ['#79b79d', 110, 1.3, .4, [446,430, 478,423, 486,440, 460,455]],
  ['#78aaa0', 90, 1.3, .45, [418,436, 446,430, 456,446, 440,458]],
  [BLUE, 40, 2, 1, [430,436, 442,431, 447,443, 433,448]],
  ['#b6df94', 40, 2, 1, [448,443, 457,440, 464,450, 452,453]],
  ['#f1f6ab', 95, 3, 1, [476,453, 486,450, 490,460, 480,463]],
  ['#fee09a', 17, 9, 1, [476,453, 486,450, 490,460, 480,463]],
  ['#c3e59c', 9, 9, 1, [496,470, 504,467, 508,476, 499,479]],
  ['#f28550', 100, 2.2, 1, [376,398, 393,391, 398,400, 380,410]],
  ['#b5614e', 40, 1.6, .6, [414,440, 436,433, 440,444, 424,450]],
  ['#e9a273', 60, 2, 1, [435,446, 453,442, 457,460, 440,462]],
  [BLUE, 38, 1.2, 1, [347,465, 352,456, 362,460, 368,485, 356,490]],
  [BLUE, 60, 1.3, 1, [360,502, 372,497, 377,518, 366,525]],
  ['#fee09a', 130, 2, 1, [350,438, 361,434, 368,452, 354,456]],
  ['#fdc47c', 215, 3.2, 1, [333,391, 337,387, 357,383, 362,402, 337,411]],
  ['#a2a67a', 50, 1.2, .3, [386,449, 396,446, 400,458, 389,462]],
  ['#a8936a', 60, 1.2, .3, [404,452, 416,447, 424,465, 408,470]],
  ['#c9c070', 45, 1.2, .5, [423,477, 442,471, 446,484, 427,490]],
  ['#fdae61', 32, 1.4, .6, [448,492, 465,487, 470,500, 454,506]],
  ['#f08250', 60, 3, 1, [449,511, 453,510, 456,516, 451,519]],
  ['#8ccba8', 110, 1.8, 1, [355,473, 368,468, 376,485, 360,492]],
  ['#9cd3a4', 45, 1.5, 1, [377,524, 384,518, 390,530, 382,543]],
  ['#fefcbb', 130, 4, 1, [364,490, 369,489, 380,486, 386,505, 368,512]],
  ['#7dbead', 85, 2, 1, [382,502, 412,493, 416,512, 386,518]],
  [BLUE, 165, 1.8, 1, [453,452, 470,447, 480,470, 462,484]],
  [BLUE, 175, 2.2, 1, [398,506, 403,502, 432,495, 440,518, 402,523]],
  [TEAL, 22, 1, 1, [554,525, 580,517, 586,542, 592,550, 562,555]],
  ['#6d6f8f', 8, 1, .45, [455,565, 485,560, 500,570, 545,566, 558,575, 506,592, 478,580]],
  ['#5a5a94', 30, 1.2, .75, [509,524, 527,520, 536,536, 543,560, 522,545]],
  ['#7d4b78', 2, 1, .85, [527,533, 535,536, 540,541, 555,538, 567,573, 531,576]],
  ['#d7191c', 0, 1, 1, [480,534, 502,528, 505,532, 511,531, 559,572, 548,575, 505,536, 488,540, 494,557, 486,550]],
  [BLUE, 70, 1.8, 1, [488,540, 505,534, 513,556, 497,566]],
  [BLUE, 125, 2.2, 1, [333,535, 336,529, 346,526, 360,534, 372,531, 377,548, 335,545]],
  [BLUE, 125, 2.4, 1, [356,566, 371,562, 398,558, 402,578, 361,582]],
  ['#62a6a5', 60, 1.4, 1, [400,559, 404,555, 416,553, 428,564, 430,578, 404,568]],
  ['#fefcbb', 45, 1.5, 1, [440,566, 447,572, 448,577, 441,572]],
  [BLUE, 125, 2.4, 1, [398,570, 412,566, 430,582, 454,577, 462,600, 420,610]],
  [BLUE, 72, 1.6, 1, [376,638, 380,629, 392,625, 397,628, 400,645, 379,649]],
  [BLUE, 60, 1.3, 1, [407,620, 419,617, 424,638, 412,642]],
  [BLUE, 60, 1.3, 1, [442,632, 456,627, 463,645, 457,656, 449,652]],
  [BLUE, 62, 1.5, 1, [405,675, 424,669, 425,656, 437,654, 442,660, 444,675, 407,682]],
  [BLUE, 34, 1.3, 1, [444,663, 456,660, 460,678, 470,668, 478,668, 480,675, 488,674, 489,663, 495,662, 504,669, 510,667, 510,658, 518,656, 526,675, 520,692, 482,700, 458,702]],
  [BLUE, 16, 1, 1, [481,707, 547,687, 553,711, 487,732]],
  [BLUE, 72, 1.8, 1, [483,608, 497,580, 514,598, 521,600, 530,625, 500,630]],
  [BLUE, 46, .9, 1, [559,676, 570,654, 576,660, 562,686]],
  ['#4795a8', 16, .9, 1, [542,592, 562,586, 569,609, 552,612, 546,609]],
  [BLUE, 14, .9, 1, [541,611, 553,609, 563,616, 565,626, 556,624]],
  [BLUE, 4, 1, 1, [567,635, 582,630, 587,635, 585,641, 571,644]],
  [BLUE, 7, .8, 1, [592,427, 614,420, 620,424, 624,442, 608,443, 600,446, 595,443]],
  [BLUE, 22, 1, 1, [577,451, 595,446, 600,450, 610,449, 612,456, 596,460, 583,466]],
  [BLUE, 9, 1, 1, [618,455, 627,453, 634,476, 620,480]],
  [BLUE, 24, .9, 1, [588,476, 607,470, 614,476, 634,472, 622,484, 622,497, 636,494, 640,499, 628,505, 620,505, 608,510, 606,530, 596,538, 586,540, 584,535, 592,520, 580,517, 576,510, 571,496, 588,491]],
  [BLUE, 28, 1, 1, [621,500, 636,494, 642,502, 630,508]],
  [BLUE, 14, 1, 1, [594,557, 614,551, 618,566, 600,577, 597,573]],
  [BLUE, 40, 1, 1, [616,550, 619,540, 622,533, 635,530, 642,548, 636,556, 622,562]],
  [BLUE, 28, 1, 1, [637,583, 655,579, 660,586, 642,592]],
  [BLUE, 8, 1, 1, [603,582, 611,580, 612,586, 606,588]],
  [BLUE, 9, .8, 1, [585,618, 627,605, 632,611, 588,626]],
  [BLUE, 6, 1, 1, [637,592, 642,590, 645,612, 641,620, 638,612]],
  [BLUE, 13, .9, 1, [593,635, 636,622, 670,612, 680,645, 604,658]],
  [BLUE, 40, .9, .8, [628,650, 650,645, 654,652, 634,660]],
  [BLUE, 8, .9, 1, [601,662, 640,652, 640,658, 605,667]],
  [BLUE, 6, .8, 1, [610,674, 636,666, 643,692, 618,701]],
  [BLUE, 11, .9, 1, [658,659, 684,651, 688,656, 675,664, 668,679, 662,672]],
];
const map = document.getElementById('map');
const ctx = map.getContext('2d');
const layer = document.createElement('canvas');
layer.width = map.width;
layer.height = map.height;
const pen = layer.getContext('2d');

function outline(pts, d) {
  pen.beginPath();
  for (let i = 0; i < pts.length; i += 2) pen.lineTo(pts[i] - 245 + d, pts[i + 1] - 195 + d * 1.02);
  pen.closePath();
}

for (const [color, length, falloff, opacity, pts] of shapes) {
  pen.clearRect(0, 0, layer.width, layer.height);
  pen.fillStyle = color;
  for (let d = length; d >= 0; d--) {
    outline(pts, d);
    pen.globalAlpha = 1;
    pen.globalCompositeOperation = 'destination-out';
    pen.fill();
    pen.globalAlpha = length ? 1 - Math.pow(d / length, falloff) : 1;
    // additive fill keeps the antialiased edges of successive steps seamless
    pen.globalCompositeOperation = 'lighter';
    pen.fill();
  }
  ctx.globalAlpha = opacity;
  ctx.drawImage(layer, 0, 0);
}
```

FILE: styles.css
```css
* { box-sizing: border-box; }
html, body { margin: 0; height: 100%; overflow: hidden; }
body { background: #d8d8d8; font: 16px/20px "Open Sans", "Noto Sans", sans-serif; color: #000; }
svg { display: block; flex: none; }
.defs { position: absolute; width: 0; height: 0; }
i, b, em { font-style: normal; font-weight: normal; }
.screen { position: relative; width: 1396px; height: 933px; overflow: hidden; }
.window { width: 1396px; height: 933px; border: 2px solid #b3b3b3; border-radius: 12px; background: #efefef; display: flex; flex-direction: column; overflow: hidden; }

.ta { font: 17px "Open Sans", sans-serif; fill: #444; }
.t11 { font: bold 12.500px "Liberation Sans", sans-serif; fill: #444; text-anchor: middle; }
.ti { font-family: "Liberation Serif", serif; font-style: italic; font-weight: bold; fill: #fff; text-anchor: middle; }
.tq { font: 26px "Liberation Serif", serif; fill: #fff; text-anchor: middle; }
.tl { font: bold 10.500px "DejaVu Sans Mono", monospace; fill: #333; text-anchor: middle; letter-spacing: .4px; }
.tm { font: bold 17px "Open Sans", sans-serif; fill: #333; text-anchor: middle; stroke: #e8ecf9; stroke-width: 5px; stroke-linejoin: round; paint-order: stroke; }
.te { font: bold 23px "DejaVu Serif", serif; fill: #5c3566; text-anchor: middle; }

.titlebar { height: 43px; background: #f3f3f3; display: flex; align-items: center; padding: 0 0 2px 11px; flex: none; font-size: 17px; }
.logo { width: 24px; height: 24px; }
.title { margin-left: 6px; }
.winctl { margin-left: auto; display: flex; gap: 55px; margin-right: 26px; }

.menubar { height: 31px; flex: none; display: grid; grid-template-columns: 77px 52px 60px 62px 86px 80px 71px 71px 96px 59px 65px 106px 60px; padding: 2px 0 0 15px; align-items: center; border-bottom: 2px solid #d4d4d4; white-space: nowrap; font-size: 17px; letter-spacing: -.05px; }
.menubar u { text-underline-offset: 3px; text-decoration-thickness: 1px; }

.toolbar { height: 58px; flex: none; display: flex; align-items: center; padding-left: 8px; background: linear-gradient(#fafafa, #eee); border-bottom: 1px solid #b2b2b2; }
.toolbar.second { border-bottom-width: 2px; height: 59px; padding-top: 2px; }
.grip { width: 7px; height: 25px; flex: none; background: radial-gradient(circle at 1px 1px, #bcbcbc 1px, transparent 1.2px) 0 0 / 4.500px 4.600px; }
.grip.first { margin-right: 4.200px; }
.grip.mid { margin: 0 5px 0 12px; }
.slot { width: 49.500px; height: 50px; flex: none; display: flex; align-items: center; justify-content: center; }
.slot svg { width: 36px; height: 36px; }
.slot.off { opacity: .32; }
.slot.corner .tri { width: 8px; height: 4px; margin: 34px -8px 0 -6px; color: #222; }
.slot.bm { width: 20px; overflow: hidden; justify-content: flex-start; margin-left: 14px; }
.pressed { width: 48px; height: 46px; border: 1px solid #acacac; border-radius: 4px; background: #dcdcdc; display: flex; align-items: center; justify-content: center; flex: none; }
.drop { width: 17.500px; display: flex; justify-content: center; color: #8f8f8f; flex: none; }
.drop svg { width: 11px; height: 6px; }
.end { margin-left: auto; display: flex; align-items: center; flex: none; }
.more { width: 13px; height: 10px; }
.e1 .grip { margin: 0 12px 0 13px; }
.e1 .big { width: 36px; height: 36px; margin-right: 12px; }
.e1 { padding-right: 6px; }
.e2 .dot { width: 7px; height: 8px; background: #c8102e; border-radius: 4px; margin-right: 11px; }
.e2 .grip { margin: 0 13px 0 14px; }
.e2 .big { width: 34px; height: 36px; }
.e2 .grip:last-child { margin: 0 10px 0 20px; }

.main { display: flex; height: 695px; flex: none; }
.left { width: 232px; display: flex; flex-direction: column; flex: none; }
.dockhead { display: flex; align-items: center; height: 30px; padding: 0 2px 0 6px; gap: 6px; font-size: 16.500px; }
.dockhead span { margin-right: auto; }
.left > .dockhead:first-child span, .rh span { padding-top: 2px; }
.dockhead svg { width: 16px; height: 16px; }
.tools { display: flex; align-items: center; height: 45px; padding: 0 0 2px 11px; gap: 14px; }
.tools svg { width: 24px; height: 24px; }
.tools .inf { width: 22px; height: 22px; }
.tree { display: grid; grid-template: 298px 21px / 209px 21px; border: 1px solid #b5b5b5; border-top: 0; height: 320px; background: #fff; font-size: 17px; }
.left > .tree { margin-top: 1px; }
.treelist { overflow: hidden; padding-top: 2px; }
.treelist p { margin: 0; height: 27px; display: flex; align-items: center; white-space: nowrap; padding-left: 10px; letter-spacing: -.07px; }
.treelist .wide { letter-spacing: .2px; }
.treelist .hl { background: #efefef; }
.ar { width: 6px; height: 12px; margin-right: 13px; color: #555; }
.ic { width: 24px; height: 24px; margin-right: 9px; }
.vbar { display: flex; flex-direction: column; border-left: 1px solid #b5b5b5; background: #e4e4e4; color: #555; }
.vbar b, .hbar b { display: flex; align-items: center; justify-content: center; background: #f8f8f8; flex: none; }
.vbar b { height: 20px; }
.vbar svg { width: 12px; height: 6px; }
.up { transform: rotate(180deg); }
.vbar i { background: linear-gradient(90deg, #fff, #f1f1f1); border: solid #b5b5b5; border-width: 1px 0; }
.tv i { height: 167px; }
.tv em { flex: 1; }
.vbar b:last-child { border-top: 1px solid #b5b5b5; }
.hbar { display: flex; border-top: 1px solid #b5b5b5; background: #e4e4e4; color: #555; }
.hbar b { width: 20px; }
.hbar svg { width: 6px; height: 12px; }
.lf { transform: rotate(180deg); }
.hbar i { width: 130px; background: #f9f9f9; border: solid #b5b5b5; border-width: 0 1px; }
.hbar em { flex: 1; border-right: 1px solid #b5b5b5; }
.cornerbox { border: solid #b5b5b5; border-width: 1px 0 0 1px; background: #efefef; }
.hsplit { height: 10px; display: flex; justify-content: center; align-items: center; }
.hsplit i { width: 26px; height: 2px; background: repeating-linear-gradient(90deg, #bbb 0 2px, transparent 2px 5px); }
.layers { height: 30px; }
.tools.lt { height: 46px; padding: 0 0 4px 6px; gap: 0; }
.lt .pressed { width: 36px; height: 34px; }
.lt .pressed svg { width: 23px; height: 19px; }
.lt .t2 { margin-left: 9px; }
.lt .dd { display: flex; margin-left: 13px; }
.lt .dd + .dd { margin-left: 12px; }
.lt .dd .tri { width: 9px; height: 5px; margin: 18px 0 0 -7px; color: #444; }
.lt .more { width: 13px; height: 10px; margin-left: auto; margin-right: 4px; }
.layerlist { flex: 1; background: #fff; border: 1px solid #b5b5b5; border-top: 0; }
.layer { height: 27px; background: #efefef; display: flex; align-items: center; padding-left: 35px; }
.layer i { width: 24px; height: 24px; background: #b2a97b; margin: 0 9px 0 10px; }
.layer u { font-weight: 700; font-size: 17px; text-underline-offset: 2px; letter-spacing: .1px; padding-top: 2px; }
.check { width: 20px; height: 20px; border: 1px solid #b0b0b0; background: #fff; display: flex; align-items: center; justify-content: center; flex: none; }
.check svg { width: 16px; height: 16px; fill: none; stroke: #000; stroke-width: 2.600px; }
.vsplit { width: 11px; flex: none; display: flex; align-items: center; justify-content: center; }
.vsplit i { width: 2px; height: 26px; background: repeating-linear-gradient(#bbb 0 2px, transparent 2px 5px); }
.canvas { width: 491px; background: #fff; border-bottom: 1px solid #b5b5b5; flex: none; margin-top: 2px; }
.canvas canvas { display: block; }
.rs { width: 13px; }

.right { flex: 1; padding: 0 5px 0 2px; display: flex; flex-direction: column; }
.right > .rh { padding: 0 0 2px 1px; margin-right: -1px; height: 32px; gap: 5px; letter-spacing: .2px; }
.combo { height: 34px; border: 1px solid #a9a9a9; border-radius: 4px; background: linear-gradient(#fefefe, #eee); display: flex; align-items: center; padding: 0 10px 0 7px; letter-spacing: -.2px; }
.cd { width: 12px; height: 6px; margin-left: auto; color: #555; }
.combo.top { margin: 3px 0 0; padding-right: 11px; }
.pi { width: 25px; height: 18px; margin-right: 4px; }
.styling { display: flex; flex: 1; margin-top: 12px; }
.tabs { width: 57px; flex: none; }
.tab { height: 46px; display: flex; align-items: center; justify-content: center; padding-right: 4px; }
.tabrest { height: 565px; background: #5d5d5d; display: flex; flex-direction: column; align-items: center; padding: 15px 13px 0 0; }
.tabrest svg:nth-child(2) { margin-top: 26px; }
.tabrest svg:nth-child(3) { margin-top: 20px; }
.tabrest svg:nth-child(4) { margin-top: 18px; }
.tabrest svg:nth-child(5) { margin-top: 19px; }
.tabrest svg:nth-child(6) { margin-top: 16px; }
.body { flex: 1; padding-left: 4px; display: flex; flex-direction: column; }
.combo.sym { margin: 8px 0 0; padding: 0 11px; }
.si { width: 20px; height: 21px; margin-right: 5px; }
.combo.sym span { letter-spacing: -.1px; }
.symtree { display: flex; margin-top: 10px; height: 202px; padding-left: 152px; }
.symlist { width: 313px; background: #fff; border: solid #b5b5b5; border-width: 0 0 1px; padding-top: 136px; }
.symlist i { display: block; height: 27px; background: #efefef; }
.sv { width: 21px; background: #fcfcfc; border-right: 1px solid #b5b5b5; border-bottom: 1px solid #b5b5b5; }
.sv em { height: 21px; background: #e6e6e6; border: solid #b5b5b5; border-width: 1px 0; }
.sv i { flex: 1; border: 0; }
.btns { margin: 3px 0 0 11px; display: grid; grid-template: repeat(3, 34px) / 36px 36px; gap: 9.500px; column-gap: 9px; width: 81px; }
.btns span, .fb { border: 1px solid #a9a9a9; border-radius: 4px; background: linear-gradient(#fefefe, #eee); display: flex; align-items: center; justify-content: center; }
.btns svg { width: 22px; height: 22px; overflow: visible; }
.btns .dis { border-color: #c9c9c9; }
.dis svg { opacity: .45; }
.props { border-top: 2px solid #fff; margin-top: 11px; display: flex; height: 258px; padding-top: 10px; }
.plist { width: 556px; flex: none; }
.groupend { width: 410px; height: 5px; border: solid #b0b0b0; border-width: 0 1px 1px; border-radius: 0 0 4px 4px; margin-left: 131px; }
.prow { display: grid; grid-template-columns: 152px 303px 19px 1fr; align-items: center; height: 34px; }
.prow > :first-child { padding-left: 15px; white-space: nowrap; letter-spacing: -.2px; }
.prow .combo { grid-column: 2 / 4; height: 33px; padding-top: 1px; }
.colorbtn { height: 33px; border: 1px solid #a9a9a9; border-radius: 4px; background: #f6f6f6; }
.cdrop { height: 33px; border: 1px solid #a9a9a9; border-radius: 4px; background: #f8f8f8; display: flex; align-items: center; justify-content: center; color: #444; }
.cdrop svg { width: 10px; height: 6px; }
.act { background: #dcdcdc; }
.fadeb { color: #aaa; border-color: #ccc; }
.ddi { width: 34px; height: 26px; margin-left: 14px; }
.c1 { margin-top: 21px; }
.c2 { margin-top: 14px; }
.c3 { margin-top: 11px; }
.c4 { margin-top: 11px; }
.c5 { margin-top: 14px; }
.prow > span:first-child { padding-top: 1px; }
.rad { display: flex; align-items: center; }
.rad i { width: 21px; height: 21px; border: 1px solid #777; border-radius: 50%; background: #fff; margin-right: 9px; }
.rad i.on { background: radial-gradient(circle, #333 4px, #fff 5px); }
.lift { margin-top: -47px; }
.ramp { padding: 6px; border-color: #c4c4c4; }
.ramp b { display: block; height: 20px; background: linear-gradient(90deg, #b9bcb6, #d5d5c9); }
.pv { width: 21px; border: 0; height: 245px; }
.pv em { height: 5px; border: solid #b5b5b5; border-width: 1px 0 0; }
.pv i { height: 60px; }
.pv .g { flex: 1; border: 0; }
.render { display: flex; align-items: center; margin-top: 18px; height: 22px; padding-left: 7px; gap: 14px; font-size: 16.500px; letter-spacing: .05px; }
.render svg { width: 11px; height: 16px; }
.foot { display: flex; align-items: center; margin-top: 13px; height: 36px; letter-spacing: -.1px; }
.fb { width: 36px; height: 34px; margin-right: 9px; }
.fb svg { width: 20px; height: 20px; }
.foot .check { margin-left: auto; margin-right: 7px; }
.foot button { width: 120px; height: 33px; margin-left: 19px; font: inherit; letter-spacing: -.1px; border: 1px solid #a9a9a9; border-radius: 4px; background: linear-gradient(#fefefe, #eee); }

.status { display: flex; align-items: center; height: 44px; padding: 2px 0 0 6px; white-space: nowrap; letter-spacing: -.25px; flex: none; }
.status > * { flex: none; }
.locate { width: 300px; height: 33px; border: 1px solid #a9a9a9; border-radius: 4px; background: #fff; color: #808080; display: flex; align-items: center; padding-left: 12px; gap: 10px; font-size: 16.800px; letter-spacing: -.1px; }
.locate svg { width: 20px; height: 20px; }
.field { height: 31px; border: 1px solid #a9a9a9; border-radius: 3px; background: #fff; display: flex; align-items: center; padding-left: 5px; }
.field > span, .coord, .locate { padding-top: 1px; }
.clip { width: 8px; overflow: hidden; display: flex; justify-content: flex-end; }
.k1 { margin-left: 58px; margin-right: 5px; }
.coord { width: 165px; padding-left: 9px; letter-spacing: 0; }
.ext { width: 24px; height: 26px; margin-left: 6px; }
.k2 { width: 6px; margin: 0 5px 0 19px; }
.scale { width: 121px; }
.scale b { margin-left: auto; width: 30px; height: 100%; border-left: 1px solid #b5b5b5; display: flex; align-items: center; justify-content: center; color: #555; }
.field svg { width: 12px; height: 6px; }
.lock { width: 20px; height: 24px; margin-left: 17px; }
.k3 { margin: 0 4px 0 11px; }
.spin { width: 126px; padding-left: 7px; }
.spin b { margin-left: auto; width: 22px; height: 100%; border-left: 1px solid #b5b5b5; display: flex; flex-direction: column; gap: 6px; align-items: center; justify-content: center; color: #555; }
.k4 { width: 10px; margin: 0 12px 0 11px; }
.status .check { margin: 0 7px 0 10px; }
.globe { width: 24px; height: 24px; margin-left: 24px; }
.epsg { margin-left: 2px; letter-spacing: .05px; font-size: 16px; }
.msg { width: 26px; height: 24px; margin-left: auto; margin-right: 44px; }

.popup { position: absolute; left: 964px; top: 0; width: 298px; height: 677px; background: #fff; border: solid #989898; border-width: 0 2px 2px 1px; box-shadow: 3px 3px 4px rgba(0, 0, 0, .35); }
.transp { height: 32px; margin: 0 7px 0 6px; border-bottom: 1px solid #bcbcbc; display: flex; padding: 4px 0 0 4px; gap: 7px; letter-spacing: .08px; }
.transp i { width: 24px; height: 25px; margin-top: -4px; border: 1px solid #c4c4c4; border-top: 0; }
.wheel { height: 305px; padding: 5px 0 0 2px; display: grid; }
.ring { grid-area: 1 / 1; width: 285px; height: 285px; margin: 3px 0 0 3px; border-radius: 50%; background: conic-gradient(from 90deg, #f00, #f0f, #00f, #0ff, #0f0, #ff0, #f00); mask: radial-gradient(circle, transparent 124px, #000 125px); }
.wtri { grid-area: 1 / 1; width: 290px; height: 290px; margin: 1px 0 0 1px; position: relative; }
.iso { isolation: isolate; }
.scr { mix-blend-mode: screen; }
.alpha { height: 24px; margin: 0 7px 0 5px; background: linear-gradient(90deg, rgba(255, 255, 255, .1), #fff), repeating-conic-gradient(#fff 0 25%, #c6c6c6 0 50%) 0 0 / 12px 12px; }
.alpha svg { width: 14px; height: 28px; margin: -1px 0 0 -6px; position: relative; }
.popup h4 { margin: 9px 0 0; height: 31px; background: #9f9f9f; color: #fff; font: inherit; font-size: 16px; line-height: 32px; padding-left: 5px; letter-spacing: -.2px; }
.swatches { display: grid; grid-template-columns: repeat(10, 24px); column-gap: 4.500px; row-gap: 4.500px; padding: 5px 0 5px 4px; }
.swatches i { height: 24px; border: 2px solid #c4c4c4; }
.popup .rec + h4 { margin-top: 0; height: 32px; }
.swatches .sel { border: 1px solid #333; border-right-width: 2px; }
.s1 { background: #a6cee3; } .s2 { background: #1b0cff; } .s3 { background: #000; } .s4 { background: #fff; } .s5 { background: #ff7f00; }
.s6 { background: #ffff13; } .s7 { background: #8c5a99; } .s8 { background: #1f78b4; } .s9 { background: #e31a1c; } .s10 { background: #e5b636; }
.s11 { background: #beb297; } .s12 { background: #987db7; } .s13 { background: #f8f8f8; } .s14 { background: #a9a9b3; } .s15 { background: #33a02c; }
.s16 { background: #2820f5; } .s17 { background: #f0f0f0; } .s18 { background: #7fa2ef; } .s19 { background: #b2df8a; } .s20 { background: #fb9a99; } .s21 { background: #fdbf6f; }
.popup ul { list-style: none; margin: 0 7px 0 6px; padding: 3px 0 0 35px; border-top: 1px solid #bcbcbc; font-size: 17px; }
.popup li { height: 36px; line-height: 36px; }
.popup .gray { color: #808080; }
.mark { position: absolute; border: 3px solid #f5060c; border-radius: 50%; }
.m1 { left: 957px; top: 0; width: 50px; height: 40px; }
.m2 { left: 1285px; top: 612px; width: 60px; height: 56px; }
```
